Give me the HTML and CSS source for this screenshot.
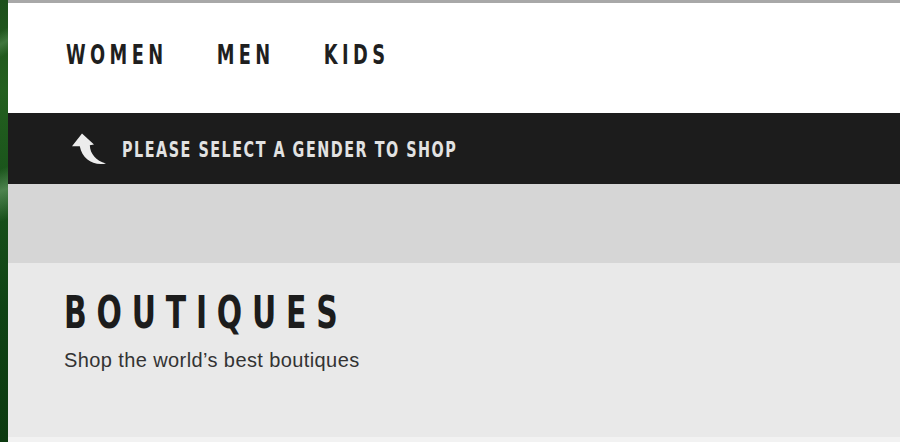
FILE: index.html
```html
<!DOCTYPE html>
<html>
<head>
<meta charset="utf-8">
<link rel="stylesheet" href="styles.css">
</head>
<body>
<div class="page">
  <div class="side"></div>
  <div class="main">
    <header class="top">
      <nav class="nav">
        <a class="nav-item">WOMEN</a>
        <a class="nav-item">MEN</a>
        <a class="nav-item">KIDS</a>
      </nav>
    </header>
    <div class="notice">
      <svg class="arrow" width="36" height="34" viewBox="0 0 36 34">
        <path d="M10 0.5 L22 11.5 L17.8 12.2 C18.3 21 23.8 27.5 34 30.5 C21 33 10.3 26 7.8 13.2 L0 13.2 Z" fill="#ececec"/>
      </svg>
      <span class="notice-text">PLEASE SELECT A GENDER TO SHOP</span>
    </div>
    <div class="band"></div>
    <section class="intro">
      <h1 class="title">BOUTIQUES</h1>
      <p class="subtitle">Shop the world’s best boutiques</p>
    </section>
    <div class="foot"></div>
  </div>
</div>
</body>
</html>
```
FILE: styles.css
```css
html, body {
  margin: 0;
  padding: 0;
  height: 442px;
  overflow: hidden;
  background: #f2f2f2;
}
.page {
  display: flex;
  height: 442px;
}
.side {
  width: 8px;
  flex: none;
  background:
    linear-gradient(150deg, rgba(120,170,120,0) 0%, rgba(120,170,120,0) 7%, rgba(120,175,120,0.35) 10%, rgba(120,170,120,0) 13%),
    linear-gradient(160deg, rgba(120,170,120,0) 0%, rgba(120,170,120,0) 38%, rgba(140,190,140,0.45) 43%, rgba(120,170,120,0) 50%),
    linear-gradient(180deg, #1d4f1b 0%, #24601f 20%, #17511a 45%, #0f4214 70%, #0c3a10 100%);
}
.main {
  flex: 1;
  display: flex;
  flex-direction: column;
  border-top: 3px solid #a8a8a8;
}
.top {
  background: #ffffff;
  height: 110px;
  box-sizing: border-box;
  padding-top: 36px;
  padding-left: 58px;
}
.nav {
  display: flex;
  gap: 67px;
  transform: scaleX(0.733);
  transform-origin: left top;
}
.nav-item {
  font-family: "DejaVu Sans Condensed", "DejaVu Sans", sans-serif;
  font-weight: bold;
  font-size: 27px;
  line-height: 32px;
  letter-spacing: 6px;
  color: #1f1f1f;
  text-decoration: none;
}
.notice {
  background: #1c1c1c;
  height: 71px;
  display: flex;
  align-items: center;
  padding-left: 64px;
}
.arrow {
  display: block;
  margin-top: 2px;
  flex: none;
}
.notice-text {
  margin-left: 14px;
  margin-top: 3px;
  font-family: "DejaVu Sans Condensed", "DejaVu Sans", sans-serif;
  font-weight: bold;
  font-size: 21px;
  letter-spacing: 2px;
  color: #e2e2e2;
  white-space: nowrap;
  transform: scaleX(0.76);
  transform-origin: left center;
}
.band {
  background: #d6d6d6;
  height: 79px;
}
.intro {
  background: #e9e9e9;
  height: 174px;
  padding-left: 56px;
  box-sizing: border-box;
  padding-top: 24px;
}
.title {
  margin: 0;
  font-family: "DejaVu Sans Condensed", "DejaVu Sans", sans-serif;
  font-weight: bold;
  font-size: 44px;
  line-height: 52px;
  letter-spacing: 13px;
  color: #1c1c1c;
  white-space: nowrap;
  transform: scaleX(0.754);
  transform-origin: left top;
}
.subtitle {
  margin: 10px 0 0 0;
  font-family: "Liberation Sans", Arial, sans-serif;
  font-size: 20px;
  line-height: 22px;
  letter-spacing: 0.4px;
  color: #333333;
}
.foot {
  flex: 1;
  background: #f2f2f2;
}
```
